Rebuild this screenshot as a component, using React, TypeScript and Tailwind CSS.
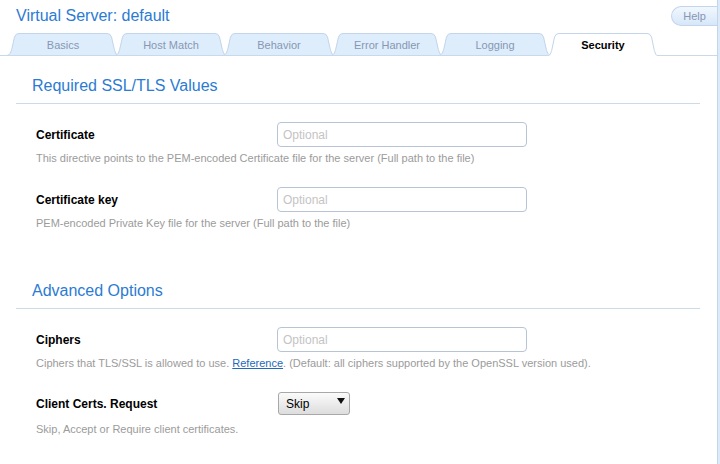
import React from 'react';

const tabs = ['Basics', 'Host Match', 'Behavior', 'Error Handler', 'Logging', 'Security'];
const activeTab = 'Security';

function Tab({ label, active }: { label: string; active: boolean }) {
    const h = active ? 23 : 22;
    const d = `M0.5 ${h} C3 ${h} 4 ${h - 3} 5 ${h - 7} L7.5 4 Q8.5 0.5 12 0.5 L100 0.5 Q103.5 0.5 104.5 4 L107 ${h - 7} C108 ${h - 3} 109 ${h} 111.5 ${h}`;
    return (
        <div
            className={`relative -ml-[4px] flex w-[112px] items-center justify-center pt-[3px] text-[11px] first:ml-0 ${active
                    ? 'z-10 -mb-px h-[23px] pb-px font-bold text-black'
                    : 'h-[22px] text-[#8797b3]'
                }`}
        >
            <svg className="absolute inset-0" width="112" height={h} viewBox={`0 0 112 ${h}`}>
                <path d={d} fill={active ? '#ffffff' : '#deedfc'} stroke="#c2d5eb" strokeWidth="1" />
            </svg>
            <span className="relative">{label}</span>
        </div>
    );
}

function TextField({ label, desc }: { label: string; desc: React.ReactNode }) {
    return (
        <div>
            <div className="flex h-[25px] items-center">
                <div className="w-[241px] text-[12px] font-bold text-black">{label}</div>
                <input
                    placeholder="Optional"
                    className="h-[25px] w-[250px] rounded-[4px] border border-[#b7c4d5] bg-white px-[5px] text-[12px] outline-none placeholder:text-[#c4c4c4]"
                />
            </div>
            <p className="mt-[4px] text-[11px] leading-[14px] text-[#9b9b9b]">{desc}</p>
        </div>
    );
}

function SectionTitle({ children }: { children: React.ReactNode }) {
    return (
        <h2 className="border-b border-[#cddae8] pb-[7px] pl-4 text-base leading-5 text-[#2b7bd3]">{children}</h2>
    );
}

export default function App() {
    return (
        <div className="flex min-h-screen bg-white font-['Liberation_Sans',Arial,sans-serif]">
            <div className="flex-1">
                <div className="flex items-start justify-between">
                    <h1 className="pl-4 pt-[6px] text-base leading-5 text-[#2b7bd3]">Virtual Server: default</h1>
                    <button className="mt-[6px] h-[20px] w-[46px] rounded-l-full border border-r-0 border-[#c2d5eb] bg-linear-to-b from-[#f1f7fe] to-[#d7e7f9] text-[11px] leading-none text-[#8797b3]">
                        Help
                    </button>
                </div>

                <div className="mt-[7px] flex h-[23px] items-end border-b border-[#c9d9ea] pl-[7px]">
                    {tabs.map((t) => (
                        <Tab key={t} label={t} active={t === activeTab} />
                    ))}
                </div>

                <section className="ml-4 mt-[20px] w-[684px]">
                    <SectionTitle>Required SSL/TLS Values</SectionTitle>
                    <div className="pl-5">
                        <div className="mt-[18px]">
                            <TextField
                                label="Certificate"
                                desc="This directive points to the PEM-encoded Certificate file for the server (Full path to the file)"
                            />
                        </div>
                        <div className="mt-[22px]">
                            <TextField
                                label="Certificate key"
                                desc="PEM-encoded Private Key file for the server (Full path to the file)"
                            />
                        </div>
                    </div>
                </section>

                <section className="ml-4 mt-[51px] w-[684px]">
                    <SectionTitle>Advanced Options</SectionTitle>
                    <div className="pl-5">
                        <div className="mt-[18px]">
                            <TextField
                                label="Ciphers"
                                desc={
                                    <>
                                        Ciphers that TLS/SSL is allowed to use.{' '}
                                        <a href="#" className="text-[#2469b8] underline">
                                            Reference
                                        </a>
                                        . (Default: all ciphers supported by the OpenSSL version used).
                                    </>
                                }
                            />
                        </div>
                        <div className="mt-[21px]">
                            <div className="flex h-[25px] items-center">
                                <div className="w-[242px] text-[12px] font-bold text-black">Client Certs. Request</div>
                                <div className="flex h-[23px] w-[72px] items-center justify-between rounded-[3px] border border-[#a8a8a8] bg-linear-to-b from-[#fbfbfb] to-[#dddddd] pl-[7px] pr-[4px] text-[12px] text-black">
                                    <span>Skip</span>
                                    <svg width="8" height="6" viewBox="0 0 8 6" className="mb-[5px]">
                                        <path d="M0 0 H8 L4 6 Z" fill="#111" />
                                    </svg>
                                </div>
                            </div>
                            <p className="mt-[6px] text-[11px] leading-[14px] text-[#9b9b9b]">
                                Skip, Accept or Require client certificates.
                            </p>
                        </div>
                    </div>
                </section>
            </div>
            <div className="w-[3px] border-l border-[#c2d5eb] bg-[#dbe9f8]" />
        </div>
    );
}
